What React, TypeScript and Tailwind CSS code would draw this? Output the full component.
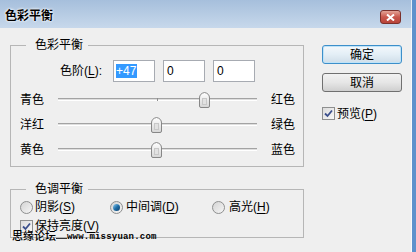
import React from "react";

const sliders = [
  { left: "青色", right: "红色", value: 47 },
  { left: "洋红", right: "绿色", value: 0 },
  { left: "黄色", right: "蓝色", value: 0 },
];

function Thumb() {
  return (
    <svg width="11" height="16" viewBox="0 0 11 16">
      <defs>
        <linearGradient id="thumbFill" x1="0" y1="0" x2="0" y2="1">
          <stop offset="0" stopColor="#ffffff" />
          <stop offset="1" stopColor="#d6d6d6" />
        </linearGradient>
      </defs>
      <path
        d="M0.5 6 Q0.5 1.5 5.5 0.5 Q10.5 1.5 10.5 6 V14 Q10.5 15.5 9 15.5 H2 Q0.5 15.5 0.5 14 Z"
        fill="url(#thumbFill)"
        stroke="#878787"
      />
      <rect x="3.5" y="6.5" width="4" height="6" fill="#e2e2e2" stroke="#c8c8c8" />
    </svg>
  );
}

function Checkbox() {
  return (
    <div className="w-[13px] h-[13px] border border-[#8e8f8f] bg-gradient-to-br from-[#dcdcdc] to-[#f8f8f8] flex items-center justify-center">
      <svg width="9" height="9" viewBox="0 0 9 9">
        <path d="M1 4.5 L3.5 7 L8 1.5" fill="none" stroke="#3b4f8c" strokeWidth="1.8" />
      </svg>
    </div>
  );
}

function Radio({ checked }: { checked?: boolean }) {
  return (
    <div className="w-[13px] h-[13px] rounded-full border border-[#8e8f8f] bg-gradient-to-br from-[#d4d4d4] to-[#f6f6f6] flex items-center justify-center">
      {checked && (
        <div className="w-[7px] h-[7px] rounded-full bg-gradient-to-br from-[#8fd2f5] via-[#1f6fa8] to-[#0f3f6b]" />
      )}
    </div>
  );
}

function Key({ k }: { k: string }) {
  return <span className="underline underline-offset-2">{k}</span>;
}

export default function App() {
  return (
    <div className="w-[416px] h-[252px] bg-[#efefef] flex flex-col relative overflow-hidden border-r-[4px] border-r-[#5f92cc] font-['Liberation_Sans','Noto_Sans_CJK_SC',sans-serif] text-[12px] text-black">
      {/* Title bar */}
      <div className="h-[28px] flex items-start justify-between pl-[5px] pr-[10px] pt-[9px] bg-gradient-to-b from-[#a6bfdc] to-[#c7d8eb] border-r border-r-[#e8eef6]">
        <span className="font-bold leading-[14px] [text-shadow:0_0_3px_#fff,0_0_2px_#fff]">色彩平衡</span>
        <div className="mt-[1px] w-[21px] h-[14px] rounded-[3px] border border-[#7b302b] bg-gradient-to-b from-[#e2a296] via-[#c9584d] to-[#b8443a] flex items-center justify-center">
          <svg width="9" height="7" viewBox="0 0 9 7">
            <path d="M1 0.5 L8 6.5 M8 0.5 L1 6.5" stroke="#fff" strokeWidth="2" />
          </svg>
        </div>
      </div>

      {/* Body */}
      <div className="flex-1 flex pl-[10px] border-r border-r-[#fafafa]">
        <div className="w-[294px] flex flex-col">
          <fieldset className="mt-[9px] border border-[#b6b6b6] pl-[9px] pt-[7px] pb-[4px]">
            <legend className="ml-[6px] pl-[9px] pr-[5px] leading-[16px]">色彩平衡</legend>
            <div className="flex items-center h-[22px] gap-[8px]">
              <span className="ml-[40px] w-[45px]">
                色阶(<Key k="L" />):
              </span>
              <div className="w-[42px] h-[22px] border border-[#a7abb2] bg-white pl-[2px] flex items-center">
                <span className="bg-[#3399ff] text-white leading-[14px] pr-[1px]">+47</span>
              </div>
              <div className="w-[42px] h-[22px] border border-[#a7abb2] bg-white pl-[3px] flex items-center">0</div>
              <div className="w-[42px] h-[22px] border border-[#a7abb2] bg-white pl-[3px] flex items-center">0</div>
            </div>
            <div className="mt-[5px] flex flex-col">
              {sliders.map((s) => (
                <div key={s.left} className="h-[25px] flex items-center">
                  <span className="w-[38px]">{s.left}</span>
                  <div className="relative w-[199px] h-[25px] flex items-center">
                    <div className="w-full h-[3px] border-t border-t-[#a3a3a3] border-b border-b-white bg-[#dedede]" />
                    <div className="absolute left-[99px] top-[11px] w-px h-[3px] bg-[#8f8f8f]" />
                    <div className="absolute top-[5px]" style={{ left: 93 + Math.round(s.value * 1.02) }}>
                      <Thumb />
                    </div>
                  </div>
                  <span className="ml-[14px]">{s.right}</span>
                </div>
              ))}
            </div>
          </fieldset>

          <fieldset className="mt-[14px] border border-[#b6b6b6] pl-[9px] pt-[3px] pb-[4px]">
            <legend className="ml-[6px] pl-[9px] pr-[5px] leading-[16px]">色调平衡</legend>
            <div className="h-[14px] flex items-center">
              <div className="w-[90px] flex items-center gap-[2px]">
                <Radio />
                <span>
                  阴影(<Key k="S" />)
                </span>
              </div>
              <div className="w-[102px] flex items-center gap-[3px]">
                <Radio checked />
                <span>
                  中间调(<Key k="D" />)
                </span>
              </div>
              <div className="flex items-center gap-[4px]">
                <Radio />
                <span>
                  高光(<Key k="H" />)
                </span>
              </div>
            </div>
            <div className="mt-[5px] h-[14px] flex items-center gap-[2px]">
              <Checkbox />
              <span>
                保持亮度(<Key k="V" />)
              </span>
            </div>
          </fieldset>
        </div>

        {/* Right column */}
        <div className="ml-[18px] w-[80px] flex flex-col pt-[17px]">
          <button className="h-[19px] w-[80px] rounded-[3px] border border-[#3d8fca] bg-gradient-to-b from-[#f4f8fb] via-[#e3eef6] to-[#cfdde8] shadow-[inset_0_0_0_1px_#bfe3f8] leading-[16px]">
            确定
          </button>
          <button className="mt-[9px] h-[19px] w-[80px] rounded-[3px] border border-[#707070] bg-gradient-to-b from-[#f2f2f2] via-[#e6e6e6] to-[#cfcfcf] leading-[16px]">
            取消
          </button>
          <div className="mt-[15px] h-[13px] flex items-center gap-[2px]">
            <Checkbox />
            <span>
              预览(<Key k="P" />)
            </span>
          </div>
        </div>
      </div>

      {/* Watermark */}
      <div className="absolute left-[12px] top-[229px] flex items-start">
        <span className="text-[11px] leading-[13px] font-['Noto_Sans_CJK_SC',sans-serif] font-medium">思缘论坛</span>
        <div className="mt-[9px] w-[11px] h-px bg-[#333]" />
        <span className="mt-[4px] font-['Liberation_Mono',monospace] font-bold text-[9px] leading-[8px] tracking-[0.2px]">
          www.missyuan.com
        </span>
      </div>
    </div>
  );
}
